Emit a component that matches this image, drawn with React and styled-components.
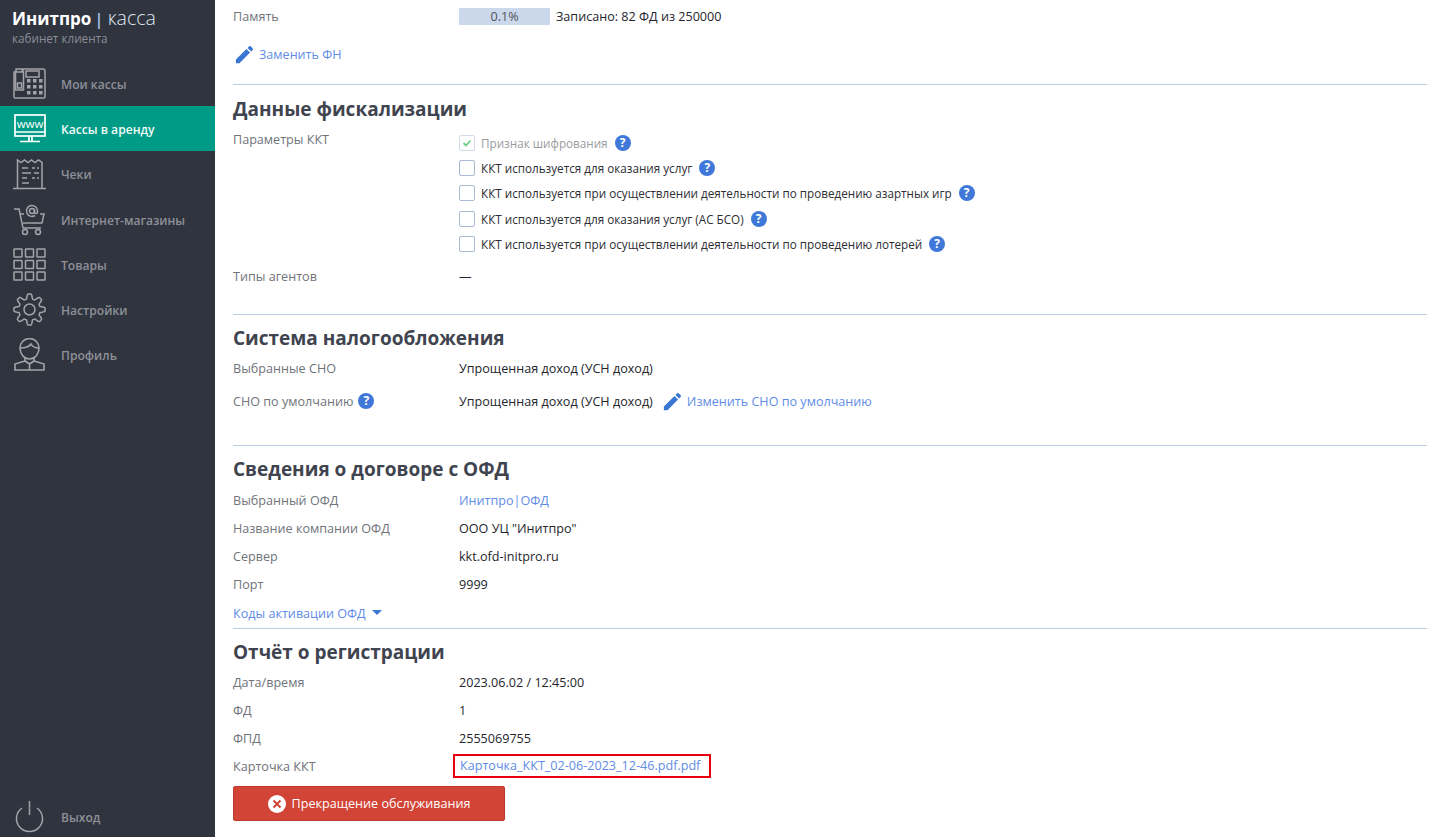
import React from "react";
import styled, { createGlobalStyle } from "styled-components";

const GlobalStyle = createGlobalStyle`
  html, body { margin: 0; padding: 0; background: #fff; }
  body { font-family: "Open Sans", "Noto Sans", sans-serif; font-size: 12.6px; color: #3a3d46; }
  * { box-sizing: border-box; }
`;

const Page = styled.div`
  display: flex;
  width: 1443px;
  height: 837px;
  overflow: hidden;
`;

const Sidebar = styled.aside`
  width: 215px;
  flex: none;
  background: #30343f;
  display: flex;
  flex-direction: column;
`;

const Logo = styled.div`
  padding: 6px 0 0 12px;
  height: 61px;
  color: #fff;
  font-size: 17px;
  line-height: 24px;
  font-weight: 700;
  white-space: nowrap;
  span { font-size: 19.5px; font-weight: 300; color: #dfe8f2; margin-left: 1px; }
  i { font-style: normal; font-weight: 600; color: #a9c4f0; margin-left: 3px; margin-right: 3px; }
  small {
    display: block;
    font-size: 11.7px;
    line-height: 14px;
    font-weight: 400;
    color: #8a8d96;
  }
`;

const NavItem = styled.a`
  display: flex;
  align-items: center;
  height: 45.2px;
  padding-left: 13px;
  gap: 15px;
  font-size: 12.1px;
  font-weight: 600;
  color: ${(p) => (p.$active ? "#f2fbfa" : "#8e9097")};
  background: ${(p) => (p.$active ? "#009b86" : "transparent")};
  svg { flex: none; width: 33px; height: 33px; color: ${(p) => (p.$active ? "#fff" : "#a2a4a9")}; }
`;

const NavLabel = styled.span`
  padding-top: 2px;
`;

const Exit = styled(NavItem)`
  margin-top: auto;
  margin-bottom: -2px;
`;

const Main = styled.main`
  flex: 1;
  padding: 2px 16px 0 18px;
`;

const Row = styled.div`
  display: flex;
  align-items: center;
  height: 28px;
  margin-top: ${(p) => p.$top ?? 0}px;
  color: #24262c;
`;

const Label = styled.div`
  width: 226px;
  flex: none;
  display: flex;
  align-items: center;
  gap: 5px;
  color: #70737a;
`;

const Progress = styled.div`
  width: 91px;
  height: 17px;
  background: #cbd7ea;
  border-radius: 1px;
  text-align: center;
  line-height: 17px;
  color: #50535c;
  margin-right: 6px;
`;

const LinkText = styled.a`
  color: #5f8ce6;
  display: inline-flex;
  align-items: center;
  margin-left: ${(p) => p.$left ?? 0}px;
`;

const Pencil = styled.svg`
  width: 23px;
  height: 23px;
  margin-right: 3px;
  color: #3a76d4;
`;

const Caret = styled.svg`
  width: 10px;
  height: 6px;
  margin-left: 6px;
`;

const Divider = styled.hr`
  border: 0;
  border-top: 1px solid #bccfe2;
  margin: ${(p) => p.$top}px 0 0;
`;

const Heading = styled.h2`
  margin: ${(p) => p.$top ?? 0}px 0 0;
  height: 40px;
  padding-top: ${(p) => p.$pad ?? 8}px;
  font-size: 19px;
  line-height: 32px;
  font-weight: 700;
  color: #40444f;
  white-space: nowrap;
`;

const ParamsRow = styled.div`
  display: flex;
  align-items: flex-start;
`;

const ParamLabel = styled(Label)`
  height: 28px;
`;

const CheckList = styled.div`
  display: flex;
  flex-direction: column;
  padding-top: 5px;
  margin-bottom: 6px;
`;

const CheckRow = styled.div`
  display: flex;
  align-items: center;
  height: 25.3px;
  font-size: 11.7px;
  color: ${(p) => (p.$disabled ? "#9a9ca1" : "#2c2e33")};
`;

const Box = styled.span`
  width: 16px;
  height: 16px;
  flex: none;
  border: 1px solid ${(p) => (p.$disabled ? "#d3dbe6" : "#a9bad3")};
  border-radius: 2px;
  margin-right: 6px;
  background: #fff;
  display: flex;
  align-items: center;
  justify-content: center;
`;

const HelpDot = styled.span`
  width: 16px;
  height: 16px;
  border-radius: 50%;
  background: #3f78d8;
  color: #fff;
  font-size: 12px;
  font-weight: 700;
  line-height: 16px;
  text-align: center;
  flex: none;
  margin-left: ${(p) => p.$left ?? 7}px;
`;

const FileLink = styled.a`
  color: #5f8ce6;
  border: 2px solid #e8000f;
  margin-left: -6px;
  padding: 0 9px 0 5px;
  height: 24px;
  line-height: 20px;
`;

const StopButton = styled.button`
  display: flex;
  align-items: center;
  justify-content: center;
  gap: 6px;
  width: 272px;
  height: 35px;
  margin-top: 6px;
  border: 1px solid #c1392e;
  border-radius: 2px;
  background: #d14436;
  color: #fff;
  font: 400 12.6px "Open Sans", sans-serif;
`;

const stroke = { fill: "none", stroke: "currentColor", strokeWidth: 1.5 };

const PhoneIcon = () => (
  <svg viewBox="0 0 33 33" {...stroke}>
    <path d="M3 5H1v25a1 1 0 0 0 1 1h29a1 1 0 0 0 1-1V4a2 2 0 0 0-2-2H10v3" />
    <path d="M3 5V2h6v3M2.500 5h8v18h-8zM4.500 16h4v5h-4zM13 4h13v6H13z" />
    {[12, 18, 24].flatMap((y) =>
      [14, 20, 26].map((x) => <rect key={`${x}-${y}`} x={x} y={y} width="3.500" height="3.500" fill="currentColor" stroke="none" />)
    )}
  </svg>
);

const MonitorIcon = () => (
  <svg viewBox="0 0 33 33" {...stroke} strokeWidth="1.700">
    <rect x="2" y="3" width="30" height="21" />
    <path d="M2 20h30M16 24v5M19 24v5M7 29.500h20" />
    <text x="17" y="16" fontSize="11.500" fontWeight="400" fontFamily="Open Sans" textAnchor="middle" fill="currentColor" stroke="none">www</text>
  </svg>
);

const ReceiptIcon = () => (
  <svg viewBox="0 0 33 33" {...stroke}>
    <path d="M4.500 31V3l3.500 2.500L11.500 3 15 5.500 18.500 3 22 5.500 25.500 3 29 5.500V31M0 31.500h33" />
    <path d="M9 11h6M19 11h3M24 11h2M9 16h9M21 16h5M9 21h5M19 21h3M24 21h2M9 26h7" />
  </svg>
);

const CartIcon = () => (
  <svg viewBox="0 0 33 33" {...stroke}>
    <path d="M1 6h5l4 19h18M7 11h4M27 11h4l-2 9H10" />
    <circle cx="12" cy="29" r="2.500" />
    <circle cx="25" cy="29" r="2.500" />
    <circle cx="19" cy="8" r="2.500" />
    <path d="M21.500 6v3a1.500 1.500 0 0 0 3 0V8a5.500 5.500 0 1 0-2.500 4.500" />
  </svg>
);

const GridIcon = () => (
  <svg viewBox="0 0 33 33" {...stroke}>
    {[1, 12.5, 24].flatMap((y) =>
      [1, 12.5, 24].map((x) => <rect key={`${x}-${y}`} x={x} y={y} width="8" height="8" rx="0.500" />)
    )}
  </svg>
);

// eight soft lobes, sampled around the circle
const gearPath = () => {
  const points = [];
  for (let deg = 0; deg < 360; deg += 3) {
    const a = (deg * Math.PI) / 180;
    const wave = Math.max(-1, Math.min(1, 1.7 * Math.cos(8 * a)));
    const r = 13.2 + 2.4 * wave;
    points.push(`${(16.5 + r * Math.cos(a)).toFixed(2)} ${(16.5 + r * Math.sin(a)).toFixed(2)}`);
  }
  return `M${points.join("L")}z`;
};

const GearIcon = () => (
  <svg viewBox="0 0 33 33" {...stroke} strokeLinejoin="round">
    <circle cx="16.500" cy="16.500" r="5.500" />
    <path d={gearPath()} />
  </svg>
);

const ProfileIcon = () => (
  <svg viewBox="0 0 33 33" {...stroke} strokeWidth="1.600">
    <path d="M7 10a9.500 9.500 0 0 1 19 0c0 6-4 11-9.500 11S7 16 7 10z" />
    <path d="M7 10c5 0 9-1 11-4 1 2 4 4 8 4" />
    <path d="M12 20v3l-10 3v6h29v-6l-10-3v-3M12 23l4.500 3 4.500-3M16.500 26v6" />
  </svg>
);

const PowerIcon = () => (
  <svg viewBox="0 0 33 33" {...stroke}>
    <path d="M9 8a13 13 0 1 0 15 0M16.500 1v14" />
  </svg>
);

const PencilIcon = () => (
  <Pencil viewBox="0 0 24 24" fill="currentColor">
    <path d="M3 17.250V21h3.750L17.810 9.940l-3.750-3.750L3 17.250zM20.710 7.040a1 1 0 0 0 0-1.410l-2.340-2.340a1 1 0 0 0-1.410 0l-1.830 1.830 3.750 3.750 1.830-1.830z" />
  </Pencil>
);

const nav = [
  ["Мои кассы", PhoneIcon],
  ["Кассы в аренду", MonitorIcon, true],
  ["Чеки", ReceiptIcon],
  ["Интернет-магазины", CartIcon],
  ["Товары", GridIcon],
  ["Настройки", GearIcon],
  ["Профиль", ProfileIcon],
];

const params = [
  "ККТ используется для оказания услуг",
  "ККТ используется при осуществлении деятельности по проведению азартных игр",
  "ККТ используется для оказания услуг (АС БСО)",
  "ККТ используется при осуществлении деятельности по проведению лотерей",
];

const InfoRow = ({ label, top, children }) => (
  <Row $top={top}>
    <Label>{label}</Label>
    {children}
  </Row>
);

export default function App() {
  return (
    <Page>
      <GlobalStyle />
      <Sidebar>
        <Logo>
          Инитпро<i>|</i><span>касса</span>
          <small>кабинет клиента</small>
        </Logo>
        {nav.map(([title, Icon, active]) => (
          <NavItem key={title} $active={active}>
            <Icon />
            <NavLabel>{title}</NavLabel>
          </NavItem>
        ))}
        <Exit>
          <PowerIcon />
          <NavLabel>Выход</NavLabel>
        </Exit>
      </Sidebar>

      <Main>
        <InfoRow label="Память">
          <Progress>0.1%</Progress>
          Записано: 82 ФД из 250000
        </InfoRow>
        <Row $top={10}>
          <LinkText><PencilIcon />Заменить ФН</LinkText>
        </Row>
        <Divider $top={16} />

        <Heading>Данные фискализации</Heading>
        <ParamsRow>
          <ParamLabel>Параметры ККТ</ParamLabel>
          <CheckList>
            <CheckRow $disabled>
              <Box $disabled>
                <svg width="10" height="10" viewBox="0 0 10 10"><path d="M1.500 5l2.500 2.500 4.500-5" fill="none" stroke="#6fcf8a" strokeWidth="1.800" /></svg>
              </Box>
              Признак шифрования <HelpDot>?</HelpDot>
            </CheckRow>
            {params.map((text) => (
              <CheckRow key={text}><Box />{text} <HelpDot>?</HelpDot></CheckRow>
            ))}
          </CheckList>
        </ParamsRow>
        <InfoRow label="Типы агентов">—</InfoRow>
        <Divider $top={24} />

        <Heading $top={-1}>Система налогообложения</Heading>
        <InfoRow label="Выбранные СНО">Упрощенная доход (УСН доход)</InfoRow>
        <InfoRow top={5} label={<>СНО по умолчанию <HelpDot $left={0}>?</HelpDot></>}>
          Упрощенная доход (УСН доход)
          <LinkText $left={8}><PencilIcon />Изменить СНО по умолчанию</LinkText>
        </InfoRow>
        <Divider $top={30} />

        <Heading $pad={7}>Сведения о договоре с ОФД</Heading>
        <InfoRow label="Выбранный ОФД"><LinkText>Инитпро|ОФД</LinkText></InfoRow>
        <InfoRow label="Название компании ОФД">ООО УЦ "Инитпро"</InfoRow>
        <InfoRow label="Сервер">kkt.ofd-initpro.ru</InfoRow>
        <InfoRow label="Порт">9999</InfoRow>
        <Row $top={1}>
          <LinkText>Коды активации ОФД
            <Caret viewBox="0 0 10 6"><path d="M0 0h10L5 5z" fill="#3a76d4" /></Caret>
          </LinkText>
        </Row>
        <Divider $top={1} />

        <Heading $top={-1}>Отчёт о регистрации</Heading>
        <InfoRow label="Дата/время">2023.06.02 / 12:45:00</InfoRow>
        <InfoRow label="ФД">1</InfoRow>
        <InfoRow label="ФПД">2555069755</InfoRow>
        <InfoRow label="Карточка ККТ">
          <FileLink>Карточка_ККТ_02-06-2023_12-46.pdf.pdf</FileLink>
        </InfoRow>
        <StopButton>
          <svg width="18" height="18" viewBox="0 0 18 18">
            <circle cx="9" cy="9" r="9" fill="#fff" />
            <path d="M5.500 5.500l7 7M12.500 5.500l-7 7" stroke="#d14436" strokeWidth="2" />
          </svg>
          Прекращение обслуживания
        </StopButton>
      </Main>
    </Page>
  );
}
